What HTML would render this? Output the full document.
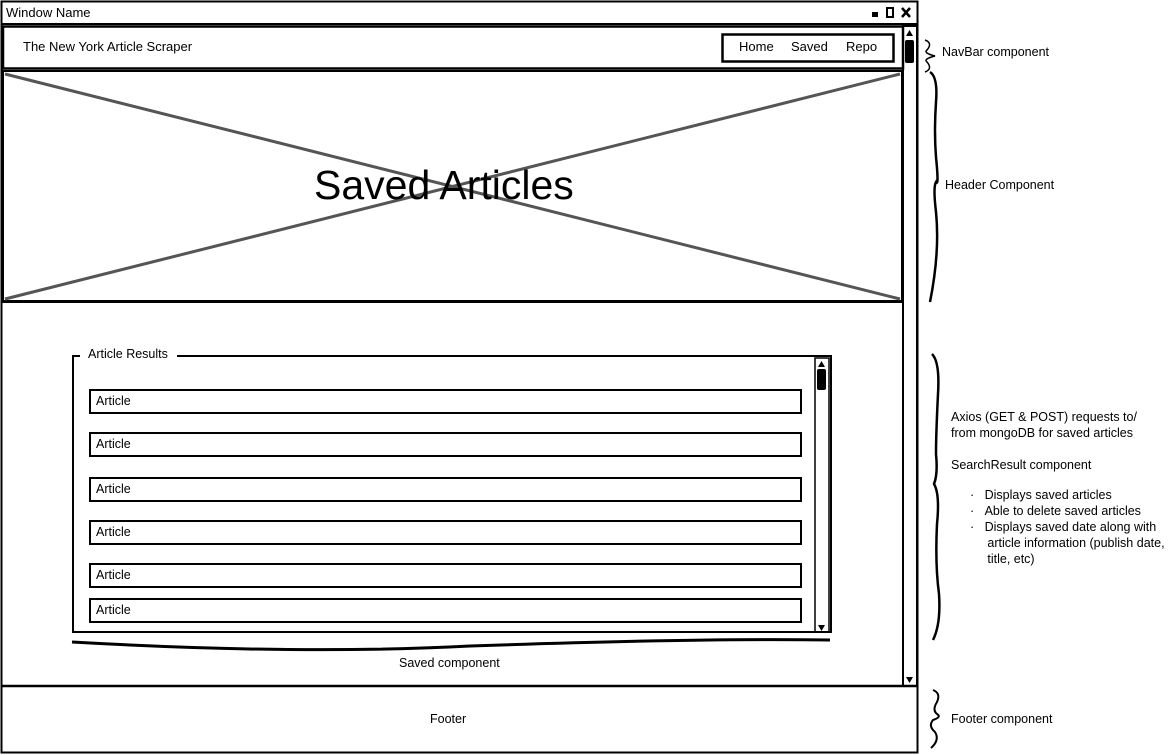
<!DOCTYPE html>
<html><head><meta charset="utf-8"><style>
body{margin:0;width:1174px;height:755px;background:#fff;position:relative;overflow:hidden;font-family:"Liberation Sans",sans-serif;font-size:13px;color:#000}
.a{position:absolute}
.t{position:absolute;white-space:nowrap}
.art{position:absolute;left:89px;width:709px;height:21px;border:2px solid #000;background:#fff}
.art span{position:absolute;left:5px;top:3px;font-size:12.5px}
</style></head><body>
<svg class="a" style="left:0;top:0" width="1174" height="755">
<g fill="none" stroke="#000">
<rect x="1.5" y="1.5" width="916" height="751" stroke-width="2"/>
<line x1="1" y1="24" x2="918" y2="24" stroke-width="2"/>
<rect x="3" y="26.5" width="900" height="42" stroke-width="2.5"/>
<rect x="3" y="71" width="899" height="230" stroke-width="2"/>
<line x1="1" y1="302" x2="903" y2="302" stroke-width="2"/>
<line x1="1" y1="686" x2="918" y2="686" stroke-width="2.5"/>
<rect x="903" y="26" width="14" height="660" stroke-width="2"/>
<rect x="722.5" y="34.5" width="171" height="27" stroke-width="2.5"/>
<g stroke="#555" stroke-width="3">
<line x1="5" y1="74" x2="900" y2="299"/><line x1="900" y1="74" x2="5" y2="299"/></g>
<path d="M80 356 H73 V632 H831 V356 H177" stroke-width="2"/>
<rect x="815" y="358" width="14" height="274" stroke-width="1.5"/>
<path d="M72 642 Q300 655 470 646 Q700 638 830 640" stroke-width="3"/>
<path d="M925 40 q8 3 2 10 q-4 3 8 6 q-12 3 -8 6 q6 7 -2 10" stroke-width="1.5"/>
<path d="M930 72 q8 5 6 30 q-2 30 0 55 q3 30 0 25 q-3 5 0 30 q4 40 -6 90" stroke-width="2.5"/>
<path d="M932 354 q8 8 6 40 q-2 40 -2 60 q2 20 -2 30 q6 10 3 40 q-2 40 2 70 q2 30 -6 46" stroke-width="2.5"/>
<path d="M933 690 q8 3 4 12 q-5 8 0 12 q5 3 -4 6 q-5 6 2 12 q5 8 -4 16" stroke-width="2"/>
</g>
<rect x="905" y="40" width="9" height="23" fill="#000" rx="2"/>
<rect x="817" y="369" width="9" height="21" fill="#000" rx="2"/>
<path d="M906 36 l3.5-6 3.5 6z M906 677 l3.5 6 3.5-6z M818 367 l3.5-6 3.5 6z M818 625 l3.5 6 3.5-6z" fill="#000"/>
<rect x="872" y="12" width="6" height="5" fill="#000"/>
<rect x="887" y="8" width="6" height="9" fill="none" stroke="#000" stroke-width="2"/>
<path d="M902 8 l8 9 M910 8 l-8 9" stroke="#000" stroke-width="2.5"/>
</svg>
<div class="t" style="left:6px;top:5px;font-size:13px">Window Name</div>
<div class="t" style="left:23px;top:39px">The New York Article Scraper</div>
<div class="t" style="left:739px;top:39px">Home</div>
<div class="t" style="left:791px;top:39px">Saved</div>
<div class="t" style="left:846px;top:39px">Repo</div>
<div class="t" style="left:314px;top:162px;font-size:41px">Saved Articles</div>
<div class="t" style="left:85px;top:347px;background:#fff;padding:0 3px;font-size:12.5px">Article Results</div>
<div class="art" style="top:389px"><span>Article</span></div>
<div class="art" style="top:432px"><span>Article</span></div>
<div class="art" style="top:477px"><span>Article</span></div>
<div class="art" style="top:520px"><span>Article</span></div>
<div class="art" style="top:563px"><span>Article</span></div>
<div class="art" style="top:598px"><span>Article</span></div>
<div class="t" style="left:399px;top:656px;font-size:12.5px">Saved component</div>
<div class="t" style="left:430px;top:712px;font-size:12.5px">Footer</div>
<div class="t" style="left:942px;top:45px;font-size:12.5px">NavBar component</div>
<div class="t" style="left:945px;top:178px;font-size:12.5px">Header Component</div>
<div class="t" style="left:951px;top:409px;font-size:12.5px;line-height:16px">Axios (GET &amp; POST) requests to/<br>from mongoDB for saved articles<br><br>SearchResult component</div>
<div class="t" style="left:970px;top:487px;font-size:12.5px;line-height:16px">·&nbsp;&nbsp;&nbsp;Displays saved articles<br>·&nbsp;&nbsp;&nbsp;Able to delete saved articles<br>·&nbsp;&nbsp;&nbsp;Displays saved date along with<br>&nbsp;&nbsp;&nbsp;&nbsp;&nbsp;article information (publish date,<br>&nbsp;&nbsp;&nbsp;&nbsp;&nbsp;title, etc)</div>
<div class="t" style="left:951px;top:712px;font-size:12.5px">Footer component</div>
</body></html>
